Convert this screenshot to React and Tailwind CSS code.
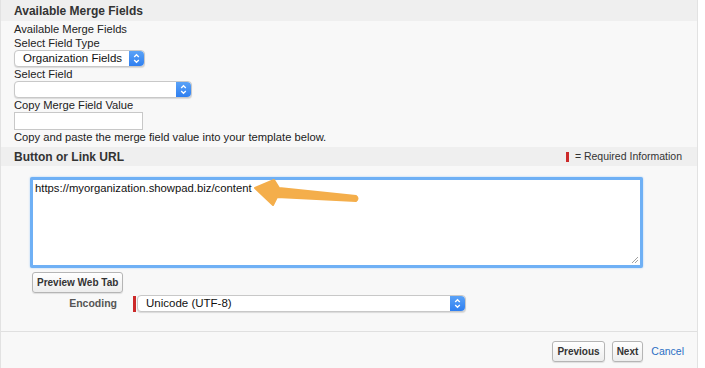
import React from "react";

const Chevrons = () => (
  <span className="flex h-full w-[15px] items-center justify-center rounded-r-[4px] bg-gradient-to-b from-[#5aa2f7] to-[#2f7ff0]">
    <svg width="7" height="11" viewBox="0 0 7 11" fill="none" stroke="white" strokeWidth="1.3">
      <path d="M1.2 4 L3.5 1.7 L5.8 4" />
      <path d="M1.2 7 L3.5 9.3 L5.8 7" />
    </svg>
  </span>
);

const Select = ({ width, value }) => (
  <div
    className={`flex h-[17px] items-center justify-between rounded-[4px] border border-[#c8c8c8] bg-white shadow-[0_1px_1px_rgba(0,0,0,0.12)] ${width}`}
  >
    <span className="pl-[8px] text-[11.5px] leading-none text-[#111]">{value}</span>
    <Chevrons />
  </div>
);

const Button = ({ children }) => (
  <button className="h-[21px] rounded-[3px] border border-[#b5b5b5] bg-gradient-to-b from-white to-[#ededed] px-[4px] text-[10px] font-bold text-[#333] shadow-[0_1px_1px_rgba(0,0,0,0.1)]">
    {children}
  </button>
);

export default function App() {
  return (
    <div className="h-[368px] w-[705px] bg-white font-['Liberation_Sans',Arial,sans-serif] text-[#222]">
      <div className="flex h-[368px] w-[698px] flex-col border-x border-[#e2e2e2] bg-[#f8f8f8]">
        <div className="flex h-[21px] items-center bg-[#efefef] pl-[13px] text-[12px] font-bold text-[#333]">
          Available Merge Fields
        </div>
        <div className="flex flex-col pl-[13px] pt-[1px] text-[11.2px] leading-[14px]">
          <div>Available Merge Fields</div>
          <div>Select Field Type</div>
          <Select width="w-[131px]" value="Organization Fields" />
          <div>Select Field</div>
          <Select width="w-[178px]" value="" />
          <div>Copy Merge Field Value</div>
          <div className="h-[18px] w-[129px] border border-[#c8c8c8] bg-white"></div>
          <div>Copy and paste the merge field value into your template below.</div>
        </div>
        <div className="mt-[3px] flex h-[19px] items-center justify-between bg-[#efefef] pl-[13px] pr-[15px]">
          <span className="text-[12px] font-bold text-[#333]">Button or Link URL</span>
          <span className="flex items-center gap-[6px] text-[10.5px] text-[#333]">
            <span className="h-[10px] w-[3px] bg-[#cc2a2a]"></span>= Required Information
          </span>
        </div>
        <div className="relative ml-[29px] mt-[11px] h-[91px] w-[613px] rounded-[2px] border-[3px] border-[#6fb0f5] bg-white shadow-[0_0_2px_#9cc9f7]">
          <div className="pl-[2px] pt-[1px] text-[11.3px] leading-[14px] text-[#111]">
            https://myorganization.showpad.biz/content
          </div>
          <svg className="absolute bottom-[1px] right-[1px]" width="8" height="8" viewBox="0 0 8 8" stroke="#888" strokeWidth="0.8">
            <path d="M1 7 L7 1 M4 7 L7 4" />
          </svg>
          <svg className="absolute left-[218px] top-[-2px]" width="112" height="30" viewBox="0 0 112 30">
            <path
              d="M4 10 L23 2 L28 10 L105 18 Q108 20.5 105 23 L26 19 L22 27 Z"
              fill="#f4ae4b"
              stroke="#f4ae4b"
              strokeLinejoin="round"
              strokeWidth="2"
            />
          </svg>
        </div>
        <div className="ml-[31px] mt-[1px]">
          <Button>Preview Web Tab</Button>
        </div>
        <div className="mt-[2px] flex items-center">
          <span className="w-[116px] text-right text-[10.5px] font-bold text-[#555]">Encoding</span>
          <span className="ml-[16px] h-[16px] w-[3px] bg-[#cc2a2a]"></span>
          <div className="ml-[1px]">
            <Select width="w-[329px]" value="Unicode (UTF-8)" />
          </div>
        </div>
        <div className="mt-[19px] border-t border-[#e0e0e0]"></div>
        <div className="mt-[9px] flex items-center justify-end gap-[7px] pr-[13px]">
          <Button>Previous</Button>
          <Button>Next</Button>
          <a className="ml-[1px] text-[10.5px] text-[#2a6fc4]">Cancel</a>
        </div>
      </div>
    </div>
  );
}
